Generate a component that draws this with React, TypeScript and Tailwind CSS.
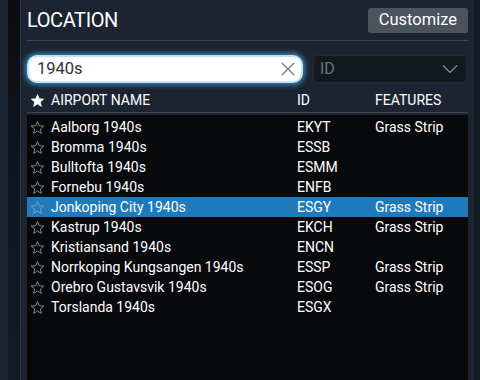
import React from "react";

type Row = { name: string; id: string; features?: string; selected?: boolean };

const rows: Row[] = [
  { name: "Aalborg 1940s", id: "EKYT", features: "Grass Strip" },
  { name: "Bromma 1940s", id: "ESSB" },
  { name: "Bulltofta 1940s", id: "ESMM" },
  { name: "Fornebu 1940s", id: "ENFB" },
  { name: "Jonkoping City 1940s", id: "ESGY", features: "Grass Strip", selected: true },
  { name: "Kastrup 1940s", id: "EKCH", features: "Grass Strip" },
  { name: "Kristiansand 1940s", id: "ENCN" },
  { name: "Norrkoping Kungsangen 1940s", id: "ESSP", features: "Grass Strip" },
  { name: "Orebro Gustavsvik 1940s", id: "ESOG", features: "Grass Strip" },
  { name: "Torslanda 1940s", id: "ESGX" },
];

function Star({ filled }: { filled?: boolean }) {
  return (
    <svg width="15" height="15" viewBox="0 0 24 24" className="shrink-0">
      <path
        d="M12 2.5l2.9 6.6 7.1.6-5.4 4.7 1.6 7-6.2-3.7-6.2 3.7 1.6-7L2 9.7l7.1-.6z"
        fill={filled ? "#ffffff" : "none"}
        stroke={filled ? "#ffffff" : "#9aa3ad"}
        strokeWidth={filled ? 1 : 1.3}
        strokeLinejoin="round"
      />
    </svg>
  );
}

export default function App() {
  return (
    <div
      className="flex w-[480px] h-[380px] overflow-hidden bg-[#18212c] text-white"
      style={{ fontFamily: "Roboto, 'Liberation Sans', sans-serif" }}
    >
      {/* scene behind the panel */}
      <div className="flex w-[20px] shrink-0">
        <div className="w-[8px] bg-[#1c2633]" />
        <div className="w-[12px] bg-gradient-to-b from-[#0a0d12] via-[#0e1622] to-[#121a24]" />
      </div>

      <div className="flex flex-col w-[454px] shrink-0 bg-[#1b2430] border-l border-[#2c3744] pl-[6px] pr-[6px]">
        <div className="flex items-center justify-between h-[40px]">
          <span className="text-[20px] leading-none tracking-[-0.4px]">LOCATION</span>
          <button className="h-[25px] px-[11px] rounded-[3px] bg-[#4b535d] text-[16.5px] leading-none text-white">
            Customize
          </button>
        </div>
        <div className="h-px bg-[#3a4452]" />

        <div className="flex items-center gap-[10px] mt-[14px]">
          <div className="flex items-center w-[276px] h-[28px] rounded-[10px] bg-white border-2 border-[#bfe4f6] shadow-[0_0_5px_2px_rgba(70,160,220,0.75)] pl-[8px] pr-[6px]">
            <span className="flex-1 text-[16.5px] text-[#333]">1940s</span>
            <svg width="14" height="14" viewBox="0 0 14 14">
              <path d="M1 1L13 13M13 1L1 13" stroke="#777" strokeWidth="1.2" />
            </svg>
          </div>
          <div className="flex items-center w-[154px] h-[28px] rounded-[3px] bg-[#14191f] border border-[#232b35] pl-[6px] pr-[8px]">
            <span className="flex-1 text-[16px] text-[#6a727c]">ID</span>
            <svg width="16" height="10" viewBox="0 0 16 10">
              <path d="M1 1.5L8 8.5L15 1.5" fill="none" stroke="#8a929b" strokeWidth="1.2" />
            </svg>
          </div>
        </div>

        <div className="flex items-center h-[24px] mt-[5px] text-[14px]">
          <div className="flex items-center gap-[6px] w-[270px] pl-[3px]">
            <Star filled />
            <span>AIRPORT NAME</span>
          </div>
          <span className="w-[78px]">ID</span>
          <span>FEATURES</span>
        </div>
        <div className="h-px bg-[#3a4452]" />

        <div className="flex-1 mt-[2px] bg-[#08090d] pt-[2px]">
          {rows.map((r) => (
            <div
              key={r.name}
              className={`flex items-center h-[20px] text-[14px] ${r.selected ? "bg-[#1f7abb]" : ""}`}
            >
              <div className="flex items-center gap-[6px] w-[270px] pl-[3px]">
                <Star />
                <span className="whitespace-nowrap">{r.name}</span>
              </div>
              <span className="w-[78px]">{r.id}</span>
              <span>{r.features}</span>
            </div>
          ))}
        </div>
      </div>

      <div className="flex-1 bg-[#141c26]" />
    </div>
  );
}
